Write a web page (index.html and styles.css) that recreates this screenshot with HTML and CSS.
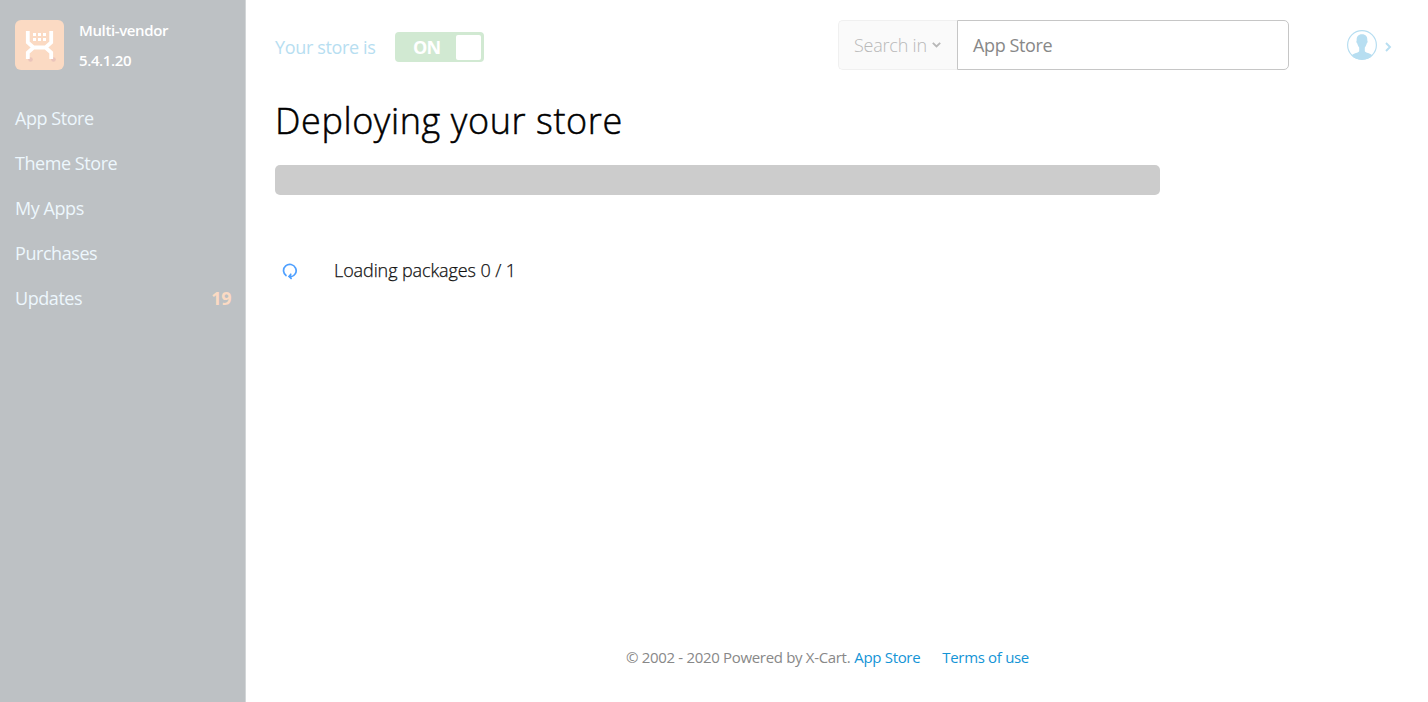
FILE: index.html
```html
<!DOCTYPE html>
<html lang="en">
<head>
<meta charset="utf-8">
<title>Deploying your store</title>
<link rel="stylesheet" href="styles.css">
</head>
<body>
<aside class="sidebar">
  <div class="brand">
    <svg class="logo" width="49" height="50" viewBox="0 0 49 50">
      <rect width="49" height="50" rx="6" fill="#fbdac3"/>
      <circle cx="15.500" cy="39.500" r="2.300" fill="#ebc5bb"/><circle cx="38.500" cy="39.500" r="2.300" fill="#ebc5bb"/>
      <path d="M12.800 11v11.500l5.700 5h12l5.700-5V11M12.800 39v-6.500l5.700-5M36.200 39v-6.500l-5.700-5" fill="none" stroke="#fff" stroke-width="3.800"/>
      <path d="M18 13h3v3h-3zM23 13h3v3h-3zM28 13h3v3h-3zM18 18h3v3h-3zM23 18h3v3h-3zM28 18h3v3h-3z" fill="#fff"/>
    </svg>
    <div class="edition"><div class="edition-name">Multi-vendor</div><div class="version">5.4.1.20</div></div>
  </div>
  <nav class="menu">
    <a class="item"><span>App Store</span></a>
    <a class="item"><span>Theme Store</span></a>
    <a class="item"><span>My Apps</span></a>
    <a class="item"><span>Purchases</span></a>
    <a class="item"><span>Updates</span><b class="count">19</b></a>
  </nav>
</aside>
<div class="page">
  <header class="header">
    <span class="status">Your store is</span>
    <div class="toggle"><span class="toggle-text">ON</span><i class="knob"></i></div>
    <div class="search">
      <div class="scope"><span>Search in</span><svg width="9" height="6" viewBox="0 0 9 6"><path d="M.8.8l3.700 3.700L8.200.8" fill="none" stroke="#b8b8b8" stroke-width="1.800"/></svg></div>
      <div class="field"><span>App Store</span></div>
    </div>
    <div class="account">
      <svg width="30" height="30" viewBox="0 0 30 30">
        <circle cx="15" cy="15" r="14.400" fill="#fff" stroke="#b7def1" stroke-width="1.200"/>
        <path d="M15 4.200c-3.800 0-5.600 2.300-5.300 6.200-.7.400-.2 2.700.6 3.200.4 1.900 1.100 3 1.900 3.900v3.700c-.7 1.600-5.500 2-7.700 4.200C7.200 28.300 11 29.700 15 29.700s7.800-1.400 10.500-4.300c-2.200-2.200-7-2.600-7.700-4.200v-3.700c.8-.9 1.500-2 1.900-3.900.8-.5 1.300-2.800.6-3.200.3-3.900-1.500-6.200-5.300-6.200z" fill="#b7def1"/>
      </svg>
      <svg class="arrow" width="7" height="10" viewBox="0 0 7 10"><path d="M1 1l4 4-4 4" fill="none" stroke="#b7def1" stroke-width="1.900"/></svg>
    </div>
  </header>
  <main class="content">
    <h1 class="title"><span>Deploying your store</span></h1>
    <div class="progress"></div>
    <div class="step">
      <svg width="16" height="17" viewBox="0 0 16 17"><path d="M4.500 13A6.300 6.300 0 1 1 8.700 13.900" fill="none" stroke="#4fa0ff" stroke-width="1.700"/><path d="M9.200 10.600L7 13.400l2.600 2.600" fill="none" stroke="#4fa0ff" stroke-width="1.500"/><path d="M6 13.500l3.200-2.500v4.700z" fill="#4fa0ff"/></svg>
      <span class="step-text">Loading packages 0 / 1</span>
    </div>
  </main>
  <footer class="footer"><span class="copyright">© 2002 - 2020 Powered by X-Cart.</span><a class="store-link">App Store</a><a class="terms">Terms of use</a></footer>
</div>
</body>
</html>
```
FILE: styles.css
```css
* { box-sizing: border-box; }
body { margin: 0; height: 702px; display: flex; overflow: hidden; background: #fff; font-family: "Open Sans", sans-serif; font-size: 18px; white-space: nowrap; }
svg { display: block; flex: none; }
.sidebar { width: 246px; flex: none; padding: 20px 15px 0; background: #bdc1c4; border-right: 1px solid #d3d6d8; }
.brand { display: flex; height: 76px; }
.edition { margin: -5px 0 0 15px; font-size: 15px; line-height: 30px; font-weight: 600; color: #fff; letter-spacing: -0.38px; }
.item { display: flex; justify-content: space-between; height: 45px; line-height: 45px; color: #edf7fd; letter-spacing: -0.44px; }
.count { color: #fbdac3; margin-right: -1px; }
.page { flex: 1; display: flex; flex-direction: column; padding: 0 37px 0 29px; }
.header { display: flex; height: 90px; padding-top: 20px; align-items: flex-start; }
.status { width: 120px; line-height: 54px; color: #b7def1; letter-spacing: -0.35px; }
.toggle { display: flex; width: 88.5px; height: 30px; margin-top: 12px; padding: 3px 2.5px 2px 18px; justify-content: space-between; border-radius: 4px; background: #d1e9d2; }
.toggle-text { color: #fff; font-weight: 700; line-height: 25px; letter-spacing: -0.8px; }
.knob { width: 25px; height: 25px; border-radius: 2px; background: #fff; }
.search { display: flex; width: 450.5px; height: 50px; margin-left: 354.5px; }
.scope { display: flex; width: 119px; padding-left: 15px; gap: 5px; align-items: center; border: 1px solid #f0f0f0; border-right: 0; border-radius: 5px 0 0 5px; background: #fafafa; color: #b8b8b8; font-weight: 350; letter-spacing: -0.22px; }
.field { flex: 1; padding-left: 15px; line-height: 48px; border: 1px solid #c6c6c6; border-radius: 0 5px 5px 0; color: #888; letter-spacing: -0.38px; }
.account { display: flex; margin: 10px 0 0 58.5px; gap: 7.500px; align-items: center; }
.arrow { margin-top: 3px; }
.content { flex: 1; }
.title { margin: 0; height: 75px; padding-top: 6px; font-size: 36px; line-height: 50px; font-weight: 300; color: #000; letter-spacing: 0.6px; -webkit-text-stroke: 0.5px #000; }
.progress { width: 885px; height: 30px; border-radius: 5px; background: #ccc; }
.step { display: flex; height: 30px; margin-top: 61px; padding-left: 7px; gap: 36px; align-items: center; color: #111; }
.step-text { margin-top: -2px; font-weight: 300; letter-spacing: -0.1px; -webkit-text-stroke: 0.25px #111; }
.footer { display: flex; height: 69px; padding-left: 351px; font-size: 15px; line-height: 48px; color: #888; letter-spacing: -0.32px; }
.store-link, .terms { color: #1494d6; }
.store-link { margin-left: 4px; }
.terms { margin-left: 22px; }
```
